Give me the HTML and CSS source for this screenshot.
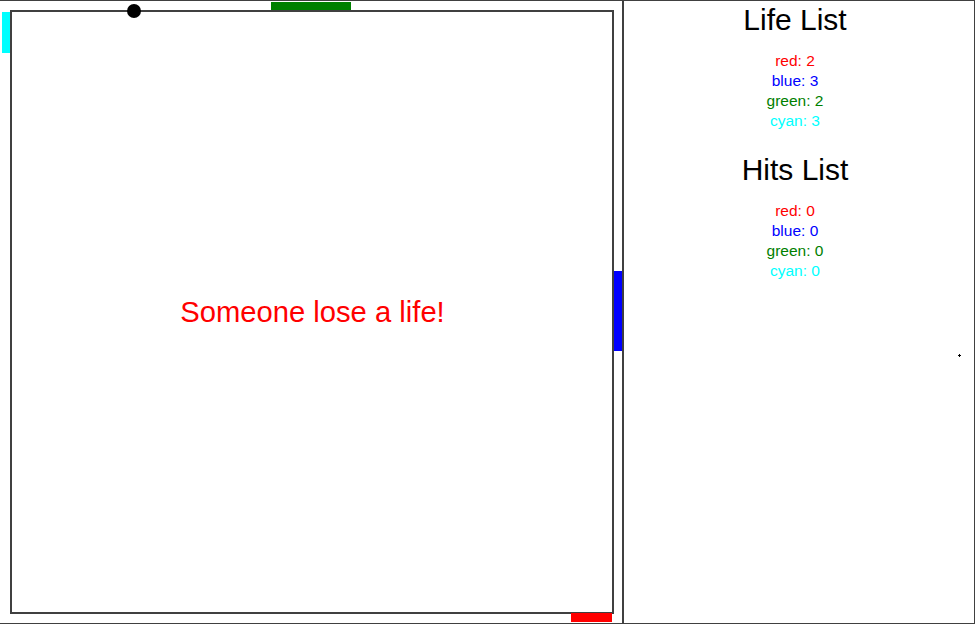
FILE: index.html
```html
<!DOCTYPE html>
<html>
<head>
<meta charset="utf-8">
<title>Pong</title>
<link rel="stylesheet" href="styles.css">
</head>
<body>
<div class="app">
  <div class="board">
    <svg class="field" width="622" height="622" viewBox="0 0 622 622">
      <rect x="2" y="11" width="8" height="41" fill="#00ffff"/>
      <rect x="271" y="1" width="80" height="8" fill="#008000"/>
      <rect x="614" y="270" width="8" height="80" fill="#0000ff"/>
      <rect x="11" y="10" width="602" height="602" fill="none" stroke="#404040" stroke-width="2"/>
      <rect x="571" y="612" width="41" height="9" fill="#ff0000"/>
      <circle cx="134" cy="10" r="7" fill="#000"/>
      <text x="312.5" y="321" text-anchor="middle" class="msg">Someone lose a life!</text>
    </svg>
  </div>
  <div class="panel">
    <h1 class="title">Life List</h1>
    <ul class="list">
      <li class="red">red: 2</li>
      <li class="blue">blue: 3</li>
      <li class="green">green: 2</li>
      <li class="cyan">cyan: 3</li>
    </ul>
    <h1 class="title">Hits List</h1>
    <ul class="list">
      <li class="red">red: 0</li>
      <li class="blue">blue: 0</li>
      <li class="green">green: 0</li>
      <li class="cyan">cyan: 0</li>
    </ul>
    <span class="cursor"></span>
  </div>
</div>
</body>
</html>
```
FILE: styles.css
```css
html, body {
  margin: 0;
  padding: 0;
  background: #fff;
}
body {
  font-family: "Liberation Sans", Arial, sans-serif;
}
.app {
  display: flex;
  width: 974px;
  height: 622px;
  border-top: 1px solid #404040;
  border-bottom: 1px solid #404040;
  border-right: 1px solid #404040;
}
.board {
  width: 622px;
  height: 622px;
  flex: none;
}
.field {
  display: block;
}
.msg {
  font-family: "Liberation Sans", Arial, sans-serif;
  font-size: 29.2px;
  fill: #ff0000;
}
.panel {
  position: relative;
  flex: 1;
  border-left: 2px solid #404040;
  padding: 2px 8px 0 0;
  text-align: center;
}
.title {
  margin: 0 0 14px;
  font-size: 30px;
  line-height: 34px;
  font-weight: normal;
  color: #000;
}
.list {
  list-style: none;
  margin: 0 0 22px;
  padding: 0;
  font-size: 15.5px;
  line-height: 20px;
}
.red { color: #ff0000; }
.blue { color: #0000ff; }
.green { color: #008000; }
.cyan { color: #00ffff; }
.cursor {
  position: absolute;
  left: 334px;
  top: 353px;
  width: 3px;
  height: 3px;
  background:
    linear-gradient(#000, #000) center / 3px 1px no-repeat,
    linear-gradient(#000, #000) center / 1px 3px no-repeat;
}
```
